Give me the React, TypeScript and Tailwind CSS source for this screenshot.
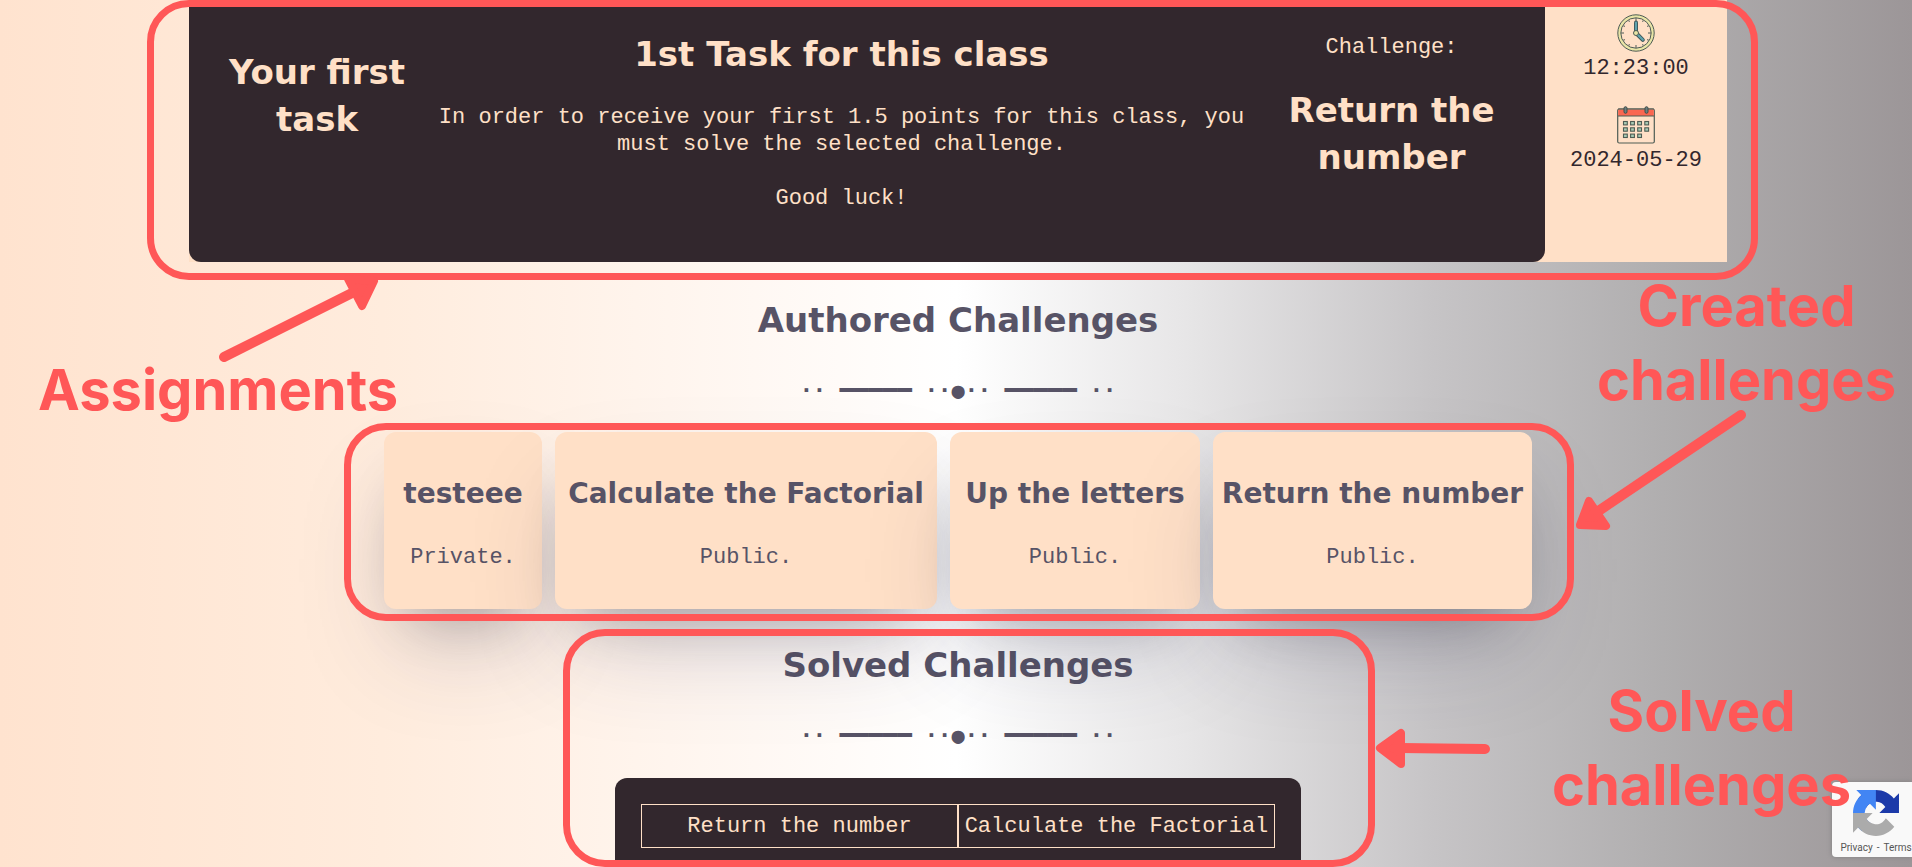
const frame = 'pointer-events-none absolute rounded-[42px] border-[7px] border-[#ff5757]';
const title = "font-['DejaVu_Sans',sans-serif] text-[34px] leading-[47px] font-bold";

const authored = [
  { name: 'testeee', status: 'Private.', width: 'w-[158px]' },
  { name: 'Calculate the Factorial', status: 'Public.', width: 'w-[382px]' },
  { name: 'Up the letters', status: 'Public.', width: 'w-[250px]' },
  { name: 'Return the number', status: 'Public.', width: 'w-[319px]' },
];

const solved = ['Return the number', 'Calculate the Factorial'];

function ClockIcon() {
  const ticks = [0, 30, 60, 90, 120, 150, 180, 210, 240, 270, 300, 330];
  return (
    <svg className="size-[38px]" viewBox="0 0 38 38" fill="none" aria-hidden="true">
      <circle cx="19" cy="19" r="16.7" stroke="#e8e4a6" strokeWidth="3" />
      <circle cx="19" cy="19" r="18.2" stroke="#4e5c54" strokeWidth="1" />
      <circle cx="19" cy="19" r="15.2" stroke="#4e5c54" strokeWidth="1" />
      {ticks.map((a) => (
        <path
          key={a}
          d={a % 90 === 0 ? 'M19 4v3' : 'M19 4.500v1.500'}
          stroke="#4e5c54"
          strokeWidth="1"
          transform={`rotate(${a} 19 19)`}
        />
      ))}
      <path d="M19 17V8.500" stroke="#3f5558" strokeWidth="4" strokeLinecap="round" />
      <path d="M19 17V8.500" stroke="#5fa3ad" strokeWidth="2.200" strokeLinecap="round" />
      <path d="M20.500 20.500l5.300 5.300" stroke="#3f5558" strokeWidth="4" strokeLinecap="round" />
      <path d="M20.500 20.500l5.300 5.300" stroke="#5fa3ad" strokeWidth="2.200" strokeLinecap="round" />
      <circle cx="19" cy="19" r="2.500" fill="#e8e4a6" stroke="#4e5c54" />
    </svg>
  );
}

function CalendarIcon() {
  const days = [0, 1, 2, 3, 4, 5, 6, 7, 8, 9, 10];
  return (
    <svg className="size-[38px]" viewBox="0 0 38 38" fill="none" aria-hidden="true">
      <rect x="0.700" y="3" width="36.600" height="34" rx="1.500" stroke="#4e5c54" strokeWidth="1.200" />
      <path d="M1.200 3.500h35.600V10H1.200z" fill="#fa6650" />
      <path d="M1 10h36M1 3h36" stroke="#4e5c54" strokeWidth="1.200" />
      <rect x="7" y="0.700" width="3" height="6.600" rx="1.500" fill="#6b7f80" stroke="#3f4c48" />
      <rect x="28" y="0.700" width="3" height="6.600" rx="1.500" fill="#6b7f80" stroke="#3f4c48" />
      {days.map((d) => (
        <rect
          key={d}
          x={6.5 + (d % 4) * 7.1}
          y={15.5 + Math.floor(d / 4) * 6.3}
          width="3.800"
          height="3.400"
          fill="#a9cbb5"
          stroke="#4e5c54"
          strokeWidth="1.100"
        />
      ))}
    </svg>
  );
}

function RecaptchaLogo() {
  return (
    <svg className="size-[46px]" viewBox="0 0 64 64" aria-hidden="true">
      <path
        fill="#1c3aa9"
        d="M64 31.955l-.033-1.37V4.687l-7.16 7.16C50.905 4.674 41.99.093 32.007.093c-10.388 0-19.618 4.96-25.463 12.64l11.736 11.86a15.55 15.55 0 0 1 4.754-5.334c2.05-1.6 4.952-2.906 8.968-2.906.485 0 .86.057 1.135.163 4.976.393 9.288 3.14 11.828 7.124l-8.307 8.307L64 31.953"
      />
      <path
        fill="#4285f4"
        d="M31.862.094l-1.37.033H4.594l7.16 7.16C4.58 13.147 0 22.06 0 32.046c0 10.388 4.96 19.618 12.64 25.463L24.5 45.773a15.55 15.55 0 0 1-5.334-4.754c-1.6-2.05-2.906-4.952-2.906-8.968 0-.485.057-.86.163-1.135.393-4.976 3.14-9.288 7.124-11.828l8.307 8.307L31.86.095"
      />
      <path
        fill="#ababab"
        d="M.001 32.045l.033 1.37v25.898l7.16-7.16c5.86 7.173 14.774 11.754 24.76 11.754 10.388 0 19.618-4.96 25.463-12.64l-11.736-11.86a15.55 15.55 0 0 1-4.754 5.334c-2.05 1.6-4.952 2.906-8.968 2.906-.485 0-.86-.057-1.135-.163-4.976-.393-9.288-3.14-11.828-7.124l8.307-8.307c-10.522.04-22.4.066-27.295-.005"
      />
    </svg>
  );
}

function Divider() {
  return (
    <p className="mt-[33px] text-center font-['DejaVu_Sans_Mono',monospace] text-[22px] leading-[27px] font-bold" aria-hidden="true">
      ·· <span className="text-2xl leading-[27px]">━━━━━</span> ··<span className="font-normal">●</span>··{' '}
      <span className="text-2xl leading-[27px]">━━━━━</span> ··
    </p>
  );
}

function Arrows() {
  return (
    <svg
      className="pointer-events-none absolute top-0 left-0 h-[867px] w-[1912px]"
      viewBox="0 0 1912 867"
      fill="#ff5757"
      stroke="#ff5757"
      strokeLinecap="round"
      strokeLinejoin="round"
      aria-hidden="true"
    >
      <path d="M224 357L356 291" strokeWidth="10" />
      <path d="M348 279L362 306L374 281Z" strokeWidth="8" />
      <path d="M1741 415L1600 510" strokeWidth="10" />
      <path d="M1580 525L1589 501L1606 526Z" strokeWidth="8" />
      <path d="M1485 749L1400 748" strokeWidth="10" />
      <path d="M1380 748L1401 733V764Z" strokeWidth="8" />
    </svg>
  );
}

const label =
  "absolute text-center font-['Inter',sans-serif] text-[56px] leading-[74px] font-bold text-[#ff5757]";

export default function App() {
  return (
    <main className="relative flex min-h-screen flex-col items-center overflow-hidden bg-[linear-gradient(90deg,#ffe3cf_0%,#ffecdd_20%,#fff5ee_35%,#ffffff_50%,#e7e6e7_62%,#c6c4c6_75%,#b0aeaf_87%,#9c9698_100%)] pl-1 font-['Liberation_Mono',monospace] text-[22px] leading-[27px] text-[#575366]">
      <section className="relative flex min-h-[262px] w-[1538px] max-w-full bg-[#ffe0c7]">
        <div className="flex flex-1 rounded-b-xl bg-[#32272d] text-center text-[#ffe0c7]">
          <h2 className={`w-[256px] shrink-0 px-6 pt-[49px] ${title}`}>Your first task</h2>
          <div className="flex-1 pt-[31px]">
            <h2 className={title}>1st Task for this class</h2>
            <p className="-mx-2 mt-[26px]">
              In order to receive your first 1.5 points for this class, you must solve the selected challenge.
            </p>
            <p className="mt-[27px]">Good luck!</p>
          </div>
          <div className="w-[307px] shrink-0 px-7 pt-[34px]">
            <p>Challenge:</p>
            <h2 className={`mt-[26px] ${title}`}>Return the number</h2>
          </div>
        </div>
        <div className="flex w-[182px] shrink-0 flex-col items-center pt-[14px] text-[#32272d]">
          <ClockIcon />
          <time className="mt-[3px]">12:23:00</time>
          <div className="mt-6">
            <CalendarIcon />
          </div>
          <time className="mt-[3px]">2024-05-29</time>
        </div>
        <div className={`${frame} top-0 -right-[31px] -bottom-[18px] -left-[42px]`} />
      </section>

      <h2 className={`mt-[35px] ${title}`}>Authored Challenges</h2>
      <Divider />

      <section className="relative mt-7 flex gap-[13px]">
        {authored.map((c) => (
          <article
            key={c.name}
            className={`${c.width} h-[177px] rounded-xl bg-[#ffe0c7] pt-[43px] text-center shadow-[0_50px_100px_-20px_rgba(50,50,93,0.25),0_30px_60px_-30px_rgba(0,0,0,0.3)]`}
          >
            <h3 className="font-['DejaVu_Sans',sans-serif] text-[28px] leading-[38px] font-bold whitespace-nowrap">
              {c.name}
            </h3>
            <p className="mt-[31px]">{c.status}</p>
          </article>
        ))}
        <div className={`${frame} -top-[9px] -right-[42px] -bottom-[12px] -left-[40px]`} />
      </section>

      <h2 className={`mt-[33px] ${title}`}>Solved Challenges</h2>
      <Divider />

      <section className="relative mt-[29px] w-[686px] rounded-t-xl bg-[#32272d] px-[26px] pt-[26px] pb-[19px] text-[#ffe0c7]">
        <ul className="grid grid-cols-2">
          {solved.map((s) => (
            <li key={s} className="flex h-11 items-center justify-center border border-[#ffe0c7] whitespace-nowrap">
              {s}
            </li>
          ))}
        </ul>
        <div className={`${frame} -top-[149px] -right-[74px] bottom-0 -left-[52px]`} />
      </section>

      <aside className="absolute right-0 bottom-[10px] flex h-[75px] w-20 flex-col items-center rounded-l bg-[#f9f9f9] pt-2 pl-2 font-['Roboto',sans-serif] text-[10px] leading-[14px] whitespace-nowrap text-[#555555] shadow-[0_0_5px_gray]">
        <RecaptchaLogo />
        <p className="mt-[5px] flex gap-1">
          <a href="#privacy">Privacy</a> - <a href="#terms">Terms</a>
        </p>
      </aside>

      <Arrows />
      <p className={`${label} top-[353px] left-[38px]`}>Assignments</p>
      <p className={`${label} top-[269px] right-[16px]`}>
        Created
        <br />
        challenges
      </p>
      <p className={`${label} top-[674px] right-[61px]`}>
        Solved
        <br />
        challenges
      </p>
    </main>
  );
}
